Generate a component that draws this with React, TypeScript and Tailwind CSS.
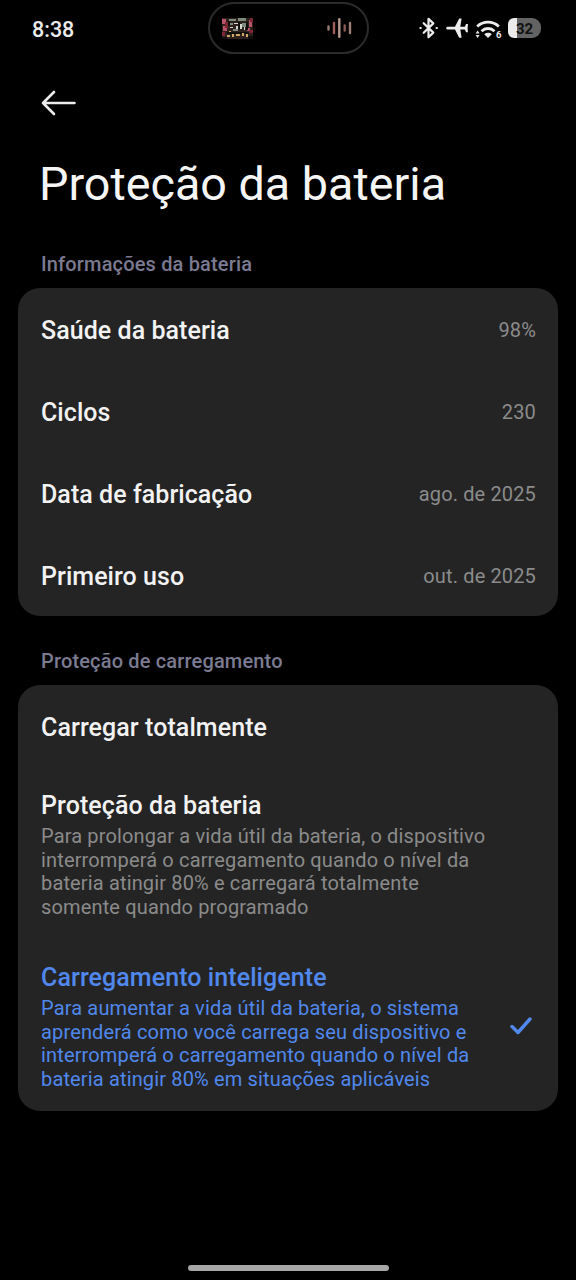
import type { ReactNode } from "react"

interface InfoRow {
  label: string
  value: string
}

interface ChargeMode {
  title: string
  lines?: string[]
  selected?: boolean
  className: string
}

const infoRows: InfoRow[] = [
  { label: "Saúde da bateria", value: "98%" },
  { label: "Ciclos", value: "230" },
  { label: "Data de fabricação", value: "ago. de 2025" },
  { label: "Primeiro uso", value: "out. de 2025" },
]

const chargeModes: ChargeMode[] = [
  { title: "Carregar totalmente", className: "h-[81px] pt-[27px]" },
  {
    title: "Proteção da bateria",
    className: "h-[172px] pt-[24px]",
    lines: [
      "Para prolongar a vida útil da bateria, o dispositivo",
      "interromperá o carregamento quando o nível da",
      "bateria atingir 80% e carregará totalmente",
      "somente quando programado",
    ],
  },
  {
    title: "Carregamento inteligente",
    className: "h-[173px] pt-[24px]",
    selected: true,
    lines: [
      "Para aumentar a vida útil da bateria, o sistema",
      "aprenderá como você carrega seu dispositivo e",
      "interromperá o carregamento quando o nível da",
      "bateria atingir 80% em situações aplicáveis",
    ],
  },
]

function Thumbnail() {
  return (
    <svg width="31" height="21" viewBox="0 0 31 21" shapeRendering="crispEdges">
      <rect width="31" height="21" fill="#2c211d" />
      <path fill="#b9536a" d="M0 1h4v5H0zM27 2h3v7h-3zM1 8h4v5H1zM25 10h3v3h-3z" />
      <path fill="#7c2636" d="M3 4h3v6H3zM28 0h3v4h-3zM27 12h4v3h-4zM0 14h3v4H0z" />
      <path fill="#7d8a7b" d="M7 1h7v2H7zM16 0h8v3h-8zM8 5h3v2H8zM20 5h4v4h-4zM11 11h5v2h-5z" />
      <path fill="#d4d8cc" d="M12 5h4v1h-4zM18 6h2v5h-2zM8 9h3v1H8zM14 8h2v3h-2zM22 9h1v3h-1z" />
      <path fill="#10110e" d="M5 14h22v2H5zM6 3h2v5H6zM16 4h2v7h-2zM24 4h2v8h-2zM0 19h5v2H0zM26 18h5v3h-5z" />
      <path fill="#cfa568" d="M5 17h3v2H5zM10 16h2v3h-2zM14 16h4v2h-4zM20 15h2v3h-2zM24 16h2v3h-2zM7 13h2v1H7z" />
    </svg>
  )
}

function StatusIcons() {
  return (
    <svg width="86" height="24" viewBox="0 0 86 24" fill="none">
      {/* Bluetooth */}
      <g stroke="#ececec" strokeWidth="2.2" strokeLinecap="round" strokeLinejoin="round">
        <path d="M5.700 7.200l9.600 9.400-4.800 4.600V2.800l4.800 4.600-9.600 9.400" />
        <path d="M2.400 12h.3M18.600 12h.3" />
      </g>
      {/* Airplane */}
      <path
        fill="#ececec"
        d="M28.200 12.200c0-.9.900-1.400 2.200-1.400h6.600l4.200-8.200h2.400l-1.300 8.200h4.500l1.300-2.700h1.900l-.4 4.100.4 4.100h-1.900l-1.300-2.700h-4.500l1.300 8.200h-2.400L37 13.600h-6.600c-1.300 0-2.200-.5-2.200-1.400z"
      />
      {/* Wi-Fi */}
      <path d="M59.200 10.400c6-5.700 15.600-5.700 21.600 0" stroke="#ececec" strokeWidth="2.8" />
      <path d="M63.500 15.200c3.800-3.600 9.200-3.600 13 0" stroke="#ececec" strokeWidth="2.8" />
      <path d="M66.200 18.200c2.200-1.800 5.400-1.800 7.600 0L70 22z" fill="#ececec" />
      <path d="M59.600 14.400l2 3h-4zM59.600 22l2-3h-4z" fill="#ececec" />
    </svg>
  )
}

function SectionLabel({ children }: { children: ReactNode }) {
  return (
    <h2 className="h-6 pl-[41px] text-[20px] leading-6 font-medium tracking-[0.16px] text-[#7b7b91]">{children}</h2>
  )
}

function StatusBar() {
  return (
    <header className="relative h-[54px] pt-[2px]">
      <span className="absolute top-[18px] left-8 text-[21.5px] leading-6 font-medium text-[#ececec]">8:38</span>
      <div className="mx-auto flex h-[52px] w-[161px] items-center justify-between rounded-full border-2 border-[#2b2b2b] pr-[14px] pl-[12px]">
        <Thumbnail />
        <svg width="26" height="20" viewBox="0 0 26 20" strokeWidth="2.400" strokeLinecap="round">
          <path d="M1.500 8.500v3M23 5v10" stroke="#9c7d76" />
          <path d="M7 5v10" stroke="#a0605a" />
          <path d="M12.300 1.200v17.600" stroke="#b79a90" />
          <path d="M17.700 7.500v5" stroke="#8b5a55" />
        </svg>
      </div>
      <div className="absolute top-4 left-[418px]">
        <StatusIcons />
        <span className="absolute top-[14px] left-[78px] text-[9.5px] leading-[10px] font-bold text-[#ececec]">6</span>
      </div>
      <div className="absolute top-[18px] left-[508px] flex h-[20px] w-[33px] items-center justify-center rounded-l-[6px] rounded-r-[9px] bg-[linear-gradient(90deg,#ececec_28%,#636363_28%)] pt-[2px] text-[15px] leading-5 font-bold text-[#111111]">
        32
      </div>
    </header>
  )
}

export default function App() {
  return (
    <div className="flex h-[1280px] w-[576px] flex-col overflow-hidden bg-black font-[Roboto,sans-serif]">
      <StatusBar />

      <button className="mt-[36px] ml-[41px] h-[26px] w-[36px]" aria-label="Voltar">
        <svg width="36" height="26" viewBox="0 0 36 26" fill="none" stroke="#ececec" strokeWidth="2.600" strokeLinecap="round" strokeLinejoin="round">
          <path d="M33.500 13H2M13 2L2 13l11 11" />
        </svg>
      </button>

      <h1 className="mt-[38px] pl-[39px] text-[46.7px] leading-[60px] text-[#f5f5f5]">Proteção da bateria</h1>

      <div className="mt-[38px]">
        <SectionLabel>Informações da bateria</SectionLabel>
      </div>
      <section className="mx-[18px] mt-[12px] h-[328px] rounded-[22px] bg-[#242424]">
        {infoRows.map((row) => (
          <div key={row.label} className="flex h-[82px] items-center justify-between pt-[2px] pr-[22px] pl-[23px]">
            <span className="mt-[2px] text-[25px] font-medium tracking-[0.05px] text-[#f2f2f2]">{row.label}</span>
            <span className="text-[20px] tracking-[0.14px] text-[#8b8b8b]">{row.value}</span>
          </div>
        ))}
      </section>

      <div className="mt-[33px]">
        <SectionLabel>Proteção de carregamento</SectionLabel>
      </div>
      <section className="mx-[18px] mt-[12px] h-[426px] rounded-[22px] bg-[#242424]">
        {chargeModes.map((mode) => (
          <div key={mode.title} className={`flex justify-between pr-[26px] pl-[23px] ${mode.className}`}>
            <div className={mode.selected ? "text-[#5088ed]" : "text-[#8b8b8b]"}>
              <h3
                className={`mb-[3px] text-[25px] leading-[32px] font-medium tracking-[0.08px] ${mode.selected ? "" : "text-[#f2f2f2]"}`}
              >
                {mode.title}
              </h3>
              {mode.lines?.map((line) => (
                <p key={line} className="text-[20px] leading-[23.7px] tracking-[0.15px] whitespace-nowrap">
                  {line}
                </p>
              ))}
            </div>
            {mode.selected && (
              <svg className="mt-[54px]" width="22" height="20" viewBox="0 0 22 20" fill="none" stroke="#5088ed" strokeWidth="3.400" strokeLinecap="round" strokeLinejoin="round">
                <path d="M2 10.500l6 6L20 3" />
              </svg>
            )}
          </div>
        ))}
      </section>

      <footer className="mt-auto flex justify-center pb-[9px]">
        <div className="h-[6px] w-[201px] rounded-full bg-[#a6a6a6]" />
      </footer>
    </div>
  )
}
